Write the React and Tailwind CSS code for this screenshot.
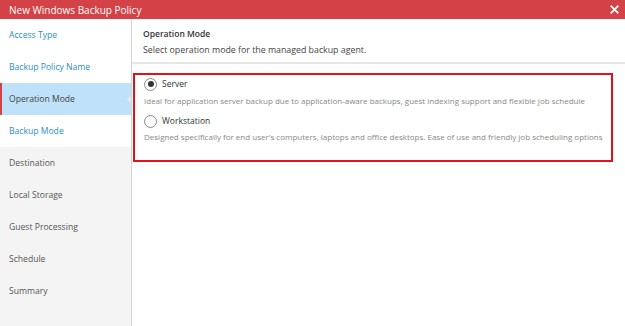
import React from "react";

const items = [
  { label: "Access Type", state: "done" },
  { label: "Backup Policy Name", state: "done" },
  { label: "Operation Mode", state: "active" },
  { label: "Backup Mode", state: "done" },
  { label: "Destination", state: "todo" },
  { label: "Local Storage", state: "todo" },
  { label: "Guest Processing", state: "todo" },
  { label: "Schedule", state: "todo" },
  { label: "Summary", state: "todo" },
];

function Radio({ checked }) {
  return (
    <span className="flex h-[13px] w-[13px] shrink-0 items-center justify-center rounded-full border border-[#8a8a8a] bg-white">
      {checked && <span className="h-[6px] w-[6px] rounded-full bg-[#333]" />}
    </span>
  );
}

export default function App() {
  return (
    <div
      className="flex h-[326px] w-[625px] flex-col overflow-hidden bg-white"
      style={{ fontFamily: '"Open Sans", sans-serif' }}
    >
      <div className="flex h-[19px] shrink-0 items-center justify-between bg-[#d24246] pl-[9px] pr-[5px] text-white">
        <span className="text-[10px] leading-none">New Windows Backup Policy</span>
        <svg width="9" height="9" viewBox="0 0 10 10" className="mr-[1px]">
          <path d="M1.5 1.5 L8.5 8.5 M8.5 1.5 L1.5 8.5" stroke="white" strokeWidth="2" strokeLinecap="square" />
        </svg>
      </div>
      <div className="flex min-h-0 flex-1">
        <div className="flex w-[132px] shrink-0 flex-col border-r border-[#d4d4d4] bg-[#f4f4f4]">
          {items.map((it) => {
            if (it.state === "active") {
              return (
                <div
                  key={it.label}
                  className="relative flex h-8 items-center border-l-2 border-[#d24246] bg-[#bfe2fa] pl-[7px] text-[8.6px] text-[#444]"
                >
                  {it.label}
                  <span className="absolute right-0 top-1/2 h-0 w-0 -translate-y-1/2 border-y-[4px] border-r-[4px] border-y-transparent border-r-[#e6e6e6]" />
                </div>
              );
            }
            return (
              <div
                key={it.label}
                className={
                  "flex h-8 items-center pl-[9px] text-[8.6px] " +
                  (it.state === "done" ? "bg-white text-[#2a8fc6]" : "text-[#555]")
                }
              >
                {it.label}
              </div>
            );
          })}
        </div>
        <div className="flex min-w-0 flex-1 flex-col">
          <div className="border-b-2 border-[#e6e6e6] pb-[4px] pl-[11px] pt-[6px]">
            <div className="text-[8.5px] font-semibold leading-[17px] text-[#333]">Operation Mode</div>
            <div className="text-[8.8px] leading-[16px] text-[#444]">
              Select operation mode for the managed backup agent.
            </div>
          </div>
          <div className="ml-[1px] mr-[12px] mt-[9px] flex h-[89px] flex-col border-2 border-[#e3111a] pl-[9px] pt-[1px]">
            <div className="flex h-[16px] items-center gap-[5px]">
              <Radio checked />
              <span className="text-[8.5px] text-[#333]">Server</span>
            </div>
            <div className="mt-[1px] text-[8px] leading-[16px] text-[#888]">
              Ideal for application server backup due to application-aware backups, guest indexing support and flexible job schedule
            </div>
            <div className="mt-[4px] flex h-[16px] items-center gap-[5px]">
              <Radio />
              <span className="text-[8.5px] text-[#333]">Workstation</span>
            </div>
            <div className="text-[8px] leading-[16px] text-[#888]">
              Designed specifically for end user's computers, laptops and office desktops. Ease of use and friendly job scheduling options
            </div>
          </div>
        </div>
      </div>
    </div>
  );
}
